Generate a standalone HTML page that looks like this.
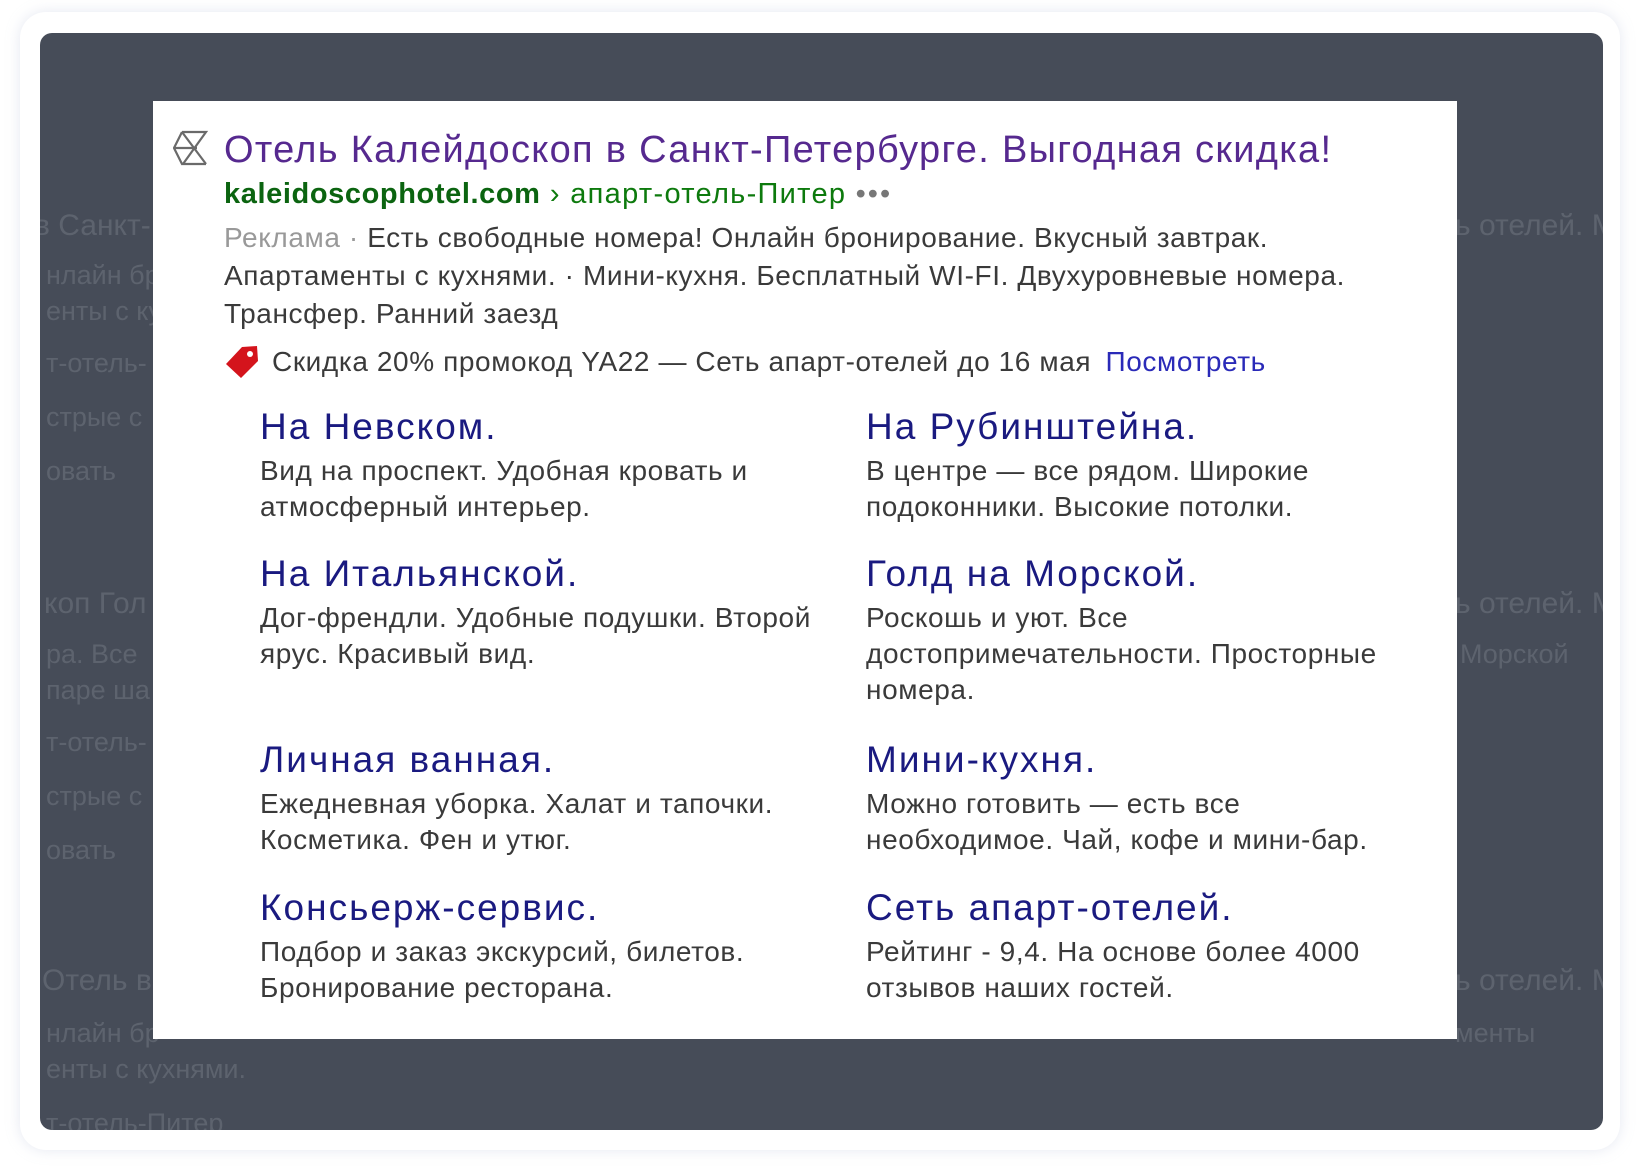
<!DOCTYPE html>
<html><head><meta charset="utf-8"><style>
*{margin:0;padding:0;box-sizing:border-box}
body{width:1640px;height:1172px;background:#fff;position:relative;overflow:hidden;font-family:"Liberation Sans","DejaVu Sans",sans-serif}
.card{position:absolute;left:20px;top:12px;width:1600px;height:1138px;border-radius:26px;background:#fff;box-shadow:0 0 14px rgba(180,190,215,.35)}
.dark{position:absolute;left:40px;top:33px;width:1563px;height:1097px;border-radius:12px;background:#464c58;overflow:hidden}
.g{position:absolute;color:#5d636e;font-size:27px;white-space:nowrap;line-height:36px}
.box{position:absolute;left:153px;top:101px;width:1304px;height:938px;background:#fff}
.t{position:absolute;white-space:nowrap}
.ttl{font-size:38px;color:#56298f;line-height:44px;letter-spacing:1.3px}
.url{font-size:29px;color:#0d7a0d;line-height:36px;letter-spacing:1.3px}
.txt{font-size:28px;color:#3a3a3a;line-height:36px;letter-spacing:0.6px}
.sl{font-size:37px;color:#1a1a80;line-height:44px;letter-spacing:2px}
</style></head><body>
<div class="card"></div>
<div class="dark">
<div class="g" style="left:-6px;top:175px;font-size:30px">в Санкт-</div>
<div class="g" style="left:6px;top:224px">нлайн бр</div>
<div class="g" style="left:6px;top:260px">енты с ку</div>
<div class="g" style="left:6px;top:312px">т-отель-</div>
<div class="g" style="left:6px;top:366px">стрые с</div>
<div class="g" style="left:6px;top:420px">овать</div>
<div class="g" style="left:4px;top:553px;font-size:30px">коп Гол</div>
<div class="g" style="left:6px;top:603px">ра. Все</div>
<div class="g" style="left:6px;top:639px">паре ша</div>
<div class="g" style="left:6px;top:691px">т-отель-</div>
<div class="g" style="left:6px;top:745px">стрые с</div>
<div class="g" style="left:6px;top:799px">овать</div>
<div class="g" style="left:2px;top:930px;font-size:30px">Отель в</div>
<div class="g" style="left:6px;top:982px">нлайн бр</div>
<div class="g" style="left:6px;top:1018px">енты с кухнями.</div>
<div class="g" style="left:6px;top:1072px">т-отель-Питер</div>
<div class="g" style="left:1415px;top:175px;font-size:30px">ь отелей. М</div>
<div class="g" style="left:1415px;top:553px;font-size:30px">ь отелей. М</div>
<div class="g" style="left:1420px;top:603px">Морской</div>
<div class="g" style="left:1415px;top:930px;font-size:30px">ь отелей. М</div>
<div class="g" style="left:1415px;top:982px">менты</div>
</div>
<div class="box"></div>
<svg style="position:absolute;left:173px;top:130px" width="36" height="36" viewBox="0 0 36 36" fill="none" stroke="#6a6a6a" stroke-width="2.2">
<path d="M9 2 L1 18 L9 34 M9 2 H33 L10 34 H33 M9 2 L33 34 M1 18 H24"/>
</svg>
<div class="t ttl" style="left:224px;top:128px">Отель Калейдоскоп в Санкт-Петербурге. Выгодная скидка!</div>
<div class="t url" style="left:224px;top:176px"><b style="color:#0b6410;letter-spacing:0.6px">kaleidoscophotel.com</b> › апарт-отель-Питер <span style="color:#777;letter-spacing:2px">•••</span></div>
<div class="t txt" style="left:224px;top:220px"><span style="color:#999">Реклама ·</span> Есть свободные номера! Онлайн бронирование. Вкусный завтрак.</div>
<div class="t txt" style="left:224px;top:258px">Апартаменты с кухнями. · Мини-кухня. Бесплатный WI-FI. Двухуровневые номера.</div>
<div class="t txt" style="left:224px;top:296px">Трансфер. Ранний заезд</div>
<svg style="position:absolute;left:224px;top:344px" width="36" height="36" viewBox="0 0 36 36"><path d="M2 20 L18 3 L33 2 L34 17 L17 34 Z" fill="#d4141c"/><circle cx="26" cy="10" r="3" fill="#fff"/></svg>
<div class="t txt" style="left:272px;top:344px">Скидка 20% промокод YA22 — Сеть апарт-отелей до 16 мая <span style="color:#2a2ab8;margin-left:6px">Посмотреть</span></div>

<div class="t sl" style="left:260px;top:405px">На Невском.</div>
<div class="t txt" style="left:260px;top:453px">Вид на проспект. Удобная кровать и<br>атмосферный интерьер.</div>
<div class="t sl" style="left:866px;top:405px">На Рубинштейна.</div>
<div class="t txt" style="left:866px;top:453px">В центре — все рядом. Широкие<br>подоконники. Высокие потолки.</div>

<div class="t sl" style="left:260px;top:552px">На Итальянской.</div>
<div class="t txt" style="left:260px;top:600px">Дог-френдли. Удобные подушки. Второй<br>ярус. Красивый вид.</div>
<div class="t sl" style="left:866px;top:552px">Голд на Морской.</div>
<div class="t txt" style="left:866px;top:600px">Роскошь и уют. Все<br>достопримечательности. Просторные<br>номера.</div>

<div class="t sl" style="left:260px;top:738px">Личная ванная.</div>
<div class="t txt" style="left:260px;top:786px">Ежедневная уборка. Халат и тапочки.<br>Косметика. Фен и утюг.</div>
<div class="t sl" style="left:866px;top:738px">Мини-кухня.</div>
<div class="t txt" style="left:866px;top:786px">Можно готовить — есть все<br>необходимое. Чай, кофе и мини-бар.</div>

<div class="t sl" style="left:260px;top:886px">Консьерж-сервис.</div>
<div class="t txt" style="left:260px;top:934px">Подбор и заказ экскурсий, билетов.<br>Бронирование ресторана.</div>
<div class="t sl" style="left:866px;top:886px">Сеть апарт-отелей.</div>
<div class="t txt" style="left:866px;top:934px">Рейтинг - 9,4. На основе более 4000<br>отзывов наших гостей.</div>
</body></html>
